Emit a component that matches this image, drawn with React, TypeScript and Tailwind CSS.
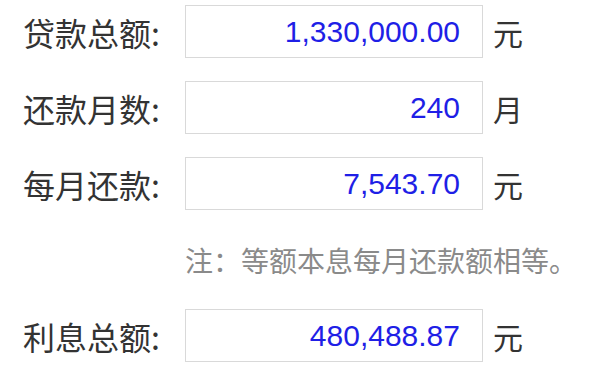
import React from 'react'

interface RowProps {
  label: string
  value: string
  unit: string
}

const cjk = { fontFamily: '"Noto Sans CJK SC", "Noto Sans", sans-serif' }

function Row({ label, value, unit }: RowProps) {
  return (
    <div className="flex items-center h-[53px]">
      <div className="w-[185px] pl-[23px] text-[32px] leading-none text-[#333]" style={cjk}>
        {label}
      </div>
      <div
        className="w-[298px] h-[53px] border border-[#d9d9d9] bg-white flex items-center justify-end pr-[22px] text-[30px] leading-none text-[#1f1fe6]"
        style={{ fontFamily: '"Liberation Sans", Arial, sans-serif' }}
      >
        {value}
      </div>
      <div className="ml-[10px] text-[30px] leading-none text-[#333]" style={cjk}>
        {unit}
      </div>
    </div>
  )
}

export default function App() {
  return (
    <div className="w-[600px] h-[382px] bg-white overflow-hidden pt-[5px]">
      <div className="flex flex-col gap-[23px]">
        <Row label="贷款总额:" value="1,330,000.00" unit="元" />
        <Row label="还款月数:" value="240" unit="月" />
        <Row label="每月还款:" value="7,543.70" unit="元" />
        {/* 注释 */}
        <div className="flex items-center h-[53px] pl-[185px]">
          <span className="text-[28px] leading-none text-[#8a8a8a] whitespace-nowrap" style={cjk}>
            注：等额本息每月还款额相等。
          </span>
        </div>
        <Row label="利息总额:" value="480,488.87" unit="元" />
      </div>
    </div>
  )
}
